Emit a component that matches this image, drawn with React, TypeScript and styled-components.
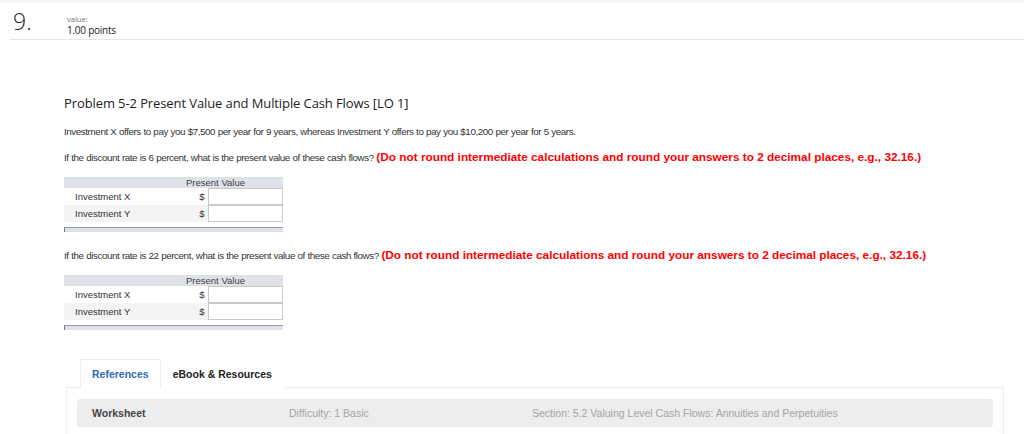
import React from 'react'
import styled, { createGlobalStyle } from 'styled-components'

const GlobalStyle = createGlobalStyle`
  html, body {
    margin: 0;
    padding: 0;
    background: #fff;
  }
  body {
    font-family: "Liberation Sans", Arial, sans-serif;
    color: #333;
  }
`

const Page = styled.div`
  width: 1024px;
  height: 434px;
  overflow: hidden;
  border-top: 3px solid #f6f6f6;
  box-sizing: border-box;
`

const Header = styled.div`
  display: flex;
  align-items: flex-start;
  margin-left: 10px;
  height: 36px;
  border-bottom: 1px solid #e6e6e6;
`

const Number = styled.div`
  width: 54px;
  padding: 7px 0 0 3px;
  font-family: "Open Sans", "Liberation Sans", sans-serif;
  font-weight: 300;
  font-size: 23px;
  line-height: 23px;
  color: #222;
`

const Value = styled.div`
  padding-top: 11px;
  font-family: "Open Sans", "Liberation Sans", sans-serif;
`

const ValueLabel = styled.div`
  font-size: 7.5px;
  line-height: 10px;
  color: #777;
`

const Points = styled.div`
  font-size: 10px;
  font-weight: 500;
  line-height: 12px;
  letter-spacing: -0.25px;
  color: #222;
`

const Body = styled.div`
  padding-left: 64px;
`

const Title = styled.h1`
  margin: 55px 0 0;
  font-family: "Open Sans", "Liberation Sans", sans-serif;
  font-size: 13px;
  font-weight: 500;
  line-height: 16px;
  color: #222;
  letter-spacing: -0.1px;
`

const Para = styled.p<{ $top: number }>`
  margin: ${({ $top }) => $top}px 0 0;
  font-family: "Liberation Sans", Arial, sans-serif;
  font-size: 9.8px;
  letter-spacing: -0.42px;
  word-spacing: 0.3px;
  line-height: 14px;
  color: #333;
`

const Warn = styled.strong`
  font-size: 11.8px;
  line-height: 1;
  letter-spacing: 0;
  word-spacing: 0;
  color: #f00;
`

const Grid = styled.div`
  width: 219px;
  margin-top: 12px;
  font-size: 9.5px;
  color: #333;
`

const HeadRow = styled.div`
  display: flex;
  height: 11px;
  line-height: 11px;
  background: #dfe1e9;
`

const HeadCell = styled.div`
  margin-left: 122px;
  color: #444;
`

const Row = styled.div<{ $alt?: boolean }>`
  display: flex;
  align-items: center;
  height: 17px;
  background: ${({ $alt }) => ($alt ? '#f4f4f4' : '#fff')};
`

const RowLabel = styled.div`
  width: 127px;
  padding-left: 11px;
`

const Dollar = styled.div`
  width: 9px;
`

const Field = styled.input`
  width: 75px;
  height: 17px;
  box-sizing: border-box;
  border: 1px solid #c9c9c9;
  margin: 0;
  padding: 0 3px;
  background: #fff;
  font-size: 10px;
`

const FootBar = styled.div`
  margin-top: 5px;
  height: 5px;
  background: #dfe1e9;
  border-top: 1px solid #9a9ca3;
  border-left: 1px solid #777;
  box-sizing: border-box;
`

const Refs = styled.div`
  margin: 29px 20px 0 66px;
`

const Tabs = styled.div`
  display: flex;
  margin-left: 14px;
`

const Tab = styled.div<{ $active?: boolean }>`
  font-size: 10.5px;
  font-weight: bold;
  height: 29px;
  line-height: 29px;
  padding: 0 11px;
  box-sizing: border-box;
  color: ${({ $active }) => ($active ? '#2e6db4' : '#222')};
  background: #fff;
  border: 1px solid ${({ $active }) => ($active ? '#eeeeee' : 'transparent')};
  border-bottom: none;
  margin-bottom: -1px;
  position: relative;
  z-index: 1;
`

const Panel = styled.div`
  border: 1px solid #eeeeee;
  border-bottom: none;
  padding: 11px 10px 20px;
`

const InfoBar = styled.div`
  display: grid;
  grid-template-columns: 197px 243px 1fr;
  align-items: center;
  height: 28px;
  padding-left: 15px;
  background: #ededed;
  border-radius: 3px;
  font-size: 10.5px;
`

const InfoCell = styled.div<{ $strong?: boolean }>`
  color: ${({ $strong }) => ($strong ? '#444' : '#a5a5a5')};
  font-weight: ${({ $strong }) => ($strong ? 'bold' : 'normal')};
`

function AnswerTable() {
  return (
    <Grid>
      <HeadRow>
        <HeadCell>Present Value</HeadCell>
      </HeadRow>
      <Row>
        <RowLabel>Investment X</RowLabel>
        <Dollar>$</Dollar>
        <Field type="text" />
      </Row>
      <Row $alt>
        <RowLabel>Investment Y</RowLabel>
        <Dollar>$</Dollar>
        <Field type="text" />
      </Row>
      <FootBar />
    </Grid>
  )
}

export default function App() {
  return (
    <>
      <GlobalStyle />
      <Page>
        <Header>
          <Number>9.</Number>
          <Value>
            <ValueLabel>value:</ValueLabel>
            <Points>1.00 points</Points>
          </Value>
        </Header>

        <Body>
          <Title>Problem 5-2 Present Value and Multiple Cash Flows [LO 1]</Title>

          <Para $top={14}>
            Investment X offers to pay you $7,500 per year for 9 years, whereas Investment Y offers to pay you
            $10,200 per year for 5 years.
          </Para>
          <Para $top={12}>
            If the discount rate is 6 percent, what is the present value of these cash flows?{' '}
            <Warn>(Do not round intermediate calculations and round your answers to 2 decimal places, e.g., 32.16.)</Warn>
          </Para>
          <AnswerTable />

          <Para $top={17}>
            If the discount rate is 22 percent, what is the present value of these cash flows?{' '}
            <Warn>(Do not round intermediate calculations and round your answers to 2 decimal places, e.g., 32.16.)</Warn>
          </Para>
          <AnswerTable />
        </Body>

        <Refs>
          <Tabs>
            <Tab $active>References</Tab>
            <Tab>eBook &amp; Resources</Tab>
          </Tabs>
          <Panel>
            <InfoBar>
              <InfoCell $strong>Worksheet</InfoCell>
              <InfoCell>Difficulty: 1 Basic</InfoCell>
              <InfoCell>Section: 5.2 Valuing Level Cash Flows: Annuities and Perpetuities</InfoCell>
            </InfoBar>
          </Panel>
        </Refs>
      </Page>
    </>
  )
}
